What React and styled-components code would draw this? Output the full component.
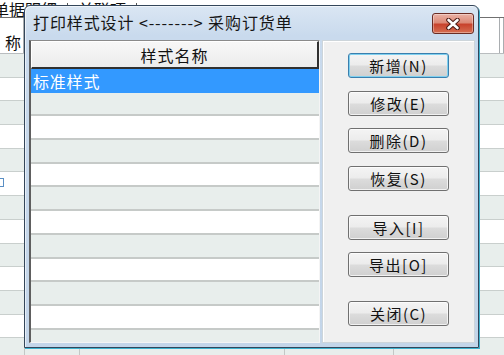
import React from 'react';
import styled, { createGlobalStyle } from 'styled-components';

const Global = createGlobalStyle`
  html, body { margin: 0; padding: 0; background: #fff; }
  body {
    width: 504px; height: 355px; overflow: hidden;
    font-family: "Noto Sans CJK SC", "Liberation Sans", sans-serif;
  }
`;

const Page = styled.div`
  position: relative;
  width: 504px;
  height: 355px;
  overflow: hidden;
  background: #fff;
`;

/* ---------- background spreadsheet ---------- */
const Sheet = styled.div`
  display: flex;
  flex-direction: column;
  width: 100%;
  height: 100%;
`;

const TabStrip = styled.div`
  height: 17px;
  flex: none;
  display: flex;
  align-items: flex-end;
  gap: 10px;
  margin-left: -7px;
  border-bottom: 1px solid #707070;
  font-size: 16px;
  line-height: 16px;
  color: #111;
  overflow: hidden;
`;

const TabSep = styled.span`
  width: 1px;
  height: 14px;
  background: #555;
`;

const HeaderRow = styled.div`
  height: 35px;
  flex: none;
  display: flex;
  border-bottom: 1px solid #b9bdbf;
`;

const HeadCell = styled.div`
  width: ${p => p.$w}px;
  flex: ${p => (p.$grow ? 1 : 'none')};
  display: flex;
  align-items: flex-end;
  justify-content: flex-end;
  padding: 0 2px 2px 0;
  box-sizing: border-box;
  border-right: 1px solid #a9adb0;
  font-size: 16px;
  line-height: 18px;
  color: #111;
`;

const BgRow = styled.div`
  height: 23.7px;
  flex: none;
  display: flex;
  box-sizing: border-box;
  border-bottom: 1px solid #c9cfcd;
  background: ${p => (p.$alt ? '#e8eeec' : '#ffffff')};
`;

const BgCell = styled.div`
  width: ${p => p.$w}px;
  flex: ${p => (p.$grow ? 1 : 'none')};
  border-right: 1px solid #c3c8c6;
  position: relative;
`;

const Handle = styled.span`
  position: absolute;
  left: -4px;
  top: 6px;
  width: 6px;
  height: 7px;
  border: 1px solid #5a8fc4;
  background: #fff;
`;

/* ---------- dialog ---------- */
const Window = styled.div`
  position: absolute;
  left: 24px;
  top: 5px;
  width: 455px;
  height: 343px;
  box-sizing: border-box;
  display: flex;
  flex-direction: column;
  border: 1px solid #34465a;
  border-radius: 6px 6px 0 0;
  background: linear-gradient(#dae6f3 0px, #c9daed 30px, #c3d5e9 100%);
  box-shadow: 1px 1px 0 #3eb2cf, inset 1px 1px 0 rgba(255,255,255,0.6);
`;

const TitleBar = styled.div`
  height: 32px;
  flex: none;
  display: flex;
  align-items: center;
  justify-content: space-between;
  padding: 0 4px 0 8px;
`;

const TitleText = styled.span`
  font-size: 16px;
  line-height: 18px;
  letter-spacing: 0.9px;
  color: #151515;
  margin-top: -1px;
`;

const CloseButton = styled.div`
  width: 42px;
  height: 21px;
  box-sizing: border-box;
  margin-top: 3px;
  display: flex;
  align-items: center;
  justify-content: center;
  border: 1px solid #6a2c24;
  border-radius: 3px;
  background: linear-gradient(#eab2a6 0%, #dc8a77 45%, #c8432d 55%, #d66f52 100%);
  box-shadow: inset 0 0 0 1px rgba(255,255,255,0.35);
`;

const Client = styled.div`
  flex: 1;
  display: flex;
  gap: 2px;
  padding: 2px 3px 4px 4px;
  min-height: 0;
`;

const ListBox = styled.div`
  width: 291px;
  flex: none;
  box-sizing: border-box;
  display: flex;
  flex-direction: column;
  overflow: hidden;
  background: #fff;
  border-left: 2px solid #5e5e5e;
  border-top: 1px solid #8a8a8a;
  border-right: 1px solid #f4f4f4;
  border-bottom: 1px solid #f4f4f4;
`;

const ListHeader = styled.div`
  height: 28px;
  flex: none;
  box-sizing: border-box;
  display: flex;
  align-items: center;
  justify-content: center;
  background: linear-gradient(#f7f7f7, #ececec);
  border-top: 1px solid #fff;
  border-left: 1px solid #fff;
  border-right: 2px solid #303030;
  border-bottom: 2px solid #303030;
  font-size: 16px;
  letter-spacing: 1px;
  color: #111;
`;

const ListRow = styled.div`
  height: 23.7px;
  flex: none;
  box-sizing: border-box;
  display: flex;
  align-items: center;
  padding-left: 2px;
  font-size: 16px;
  letter-spacing: 0.8px;
  color: ${p => (p.$selected ? '#fff' : '#111')};
  background: ${p => (p.$selected ? '#3399ff' : p.$alt ? '#e8eeec' : '#ffffff')};
  border-bottom: ${p => (p.$selected ? 'none' : '2px solid #c6cac8')};
`;

const Panel = styled.div`
  flex: 1;
  box-sizing: border-box;
  display: flex;
  flex-direction: column;
  align-items: center;
  padding-top: 12px;
  gap: 12.5px;
  background: #f0f0f0;
  border: 1px solid #cdd5da;
  box-shadow: inset 1px 1px 0 #fff;
`;

const Button = styled.div`
  width: 101px;
  height: 25px;
  flex: none;
  box-sizing: border-box;
  margin-top: ${p => p.$extra || 0}px;
  display: flex;
  align-items: center;
  justify-content: center;
  border: 1px solid ${p => (p.$default ? '#3a7fae' : '#707070')};
  border-radius: 3px;
  background: linear-gradient(#f4f4f4 0%, #ececec 48%, #dcdcdc 52%, #d0d0d0 100%);
  box-shadow: ${p => (p.$default ? 'inset 0 0 0 1px #7fd0ef' : 'inset 0 0 0 1px rgba(255,255,255,0.7)')};
  font-size: 15px;
  letter-spacing: 1.5px;
  color: #111;
`;

const CloseIcon = () => (
  <svg width="16" height="12" viewBox="0 0 16 12">
    <path d="M3.5 2 L12.5 10 M12.5 2 L3.5 10" stroke="#4a1a14" strokeWidth="4.6" strokeLinecap="round" />
    <path d="M3.5 2 L12.5 10 M12.5 2 L3.5 10" stroke="#ffffff" strokeWidth="2.6" strokeLinecap="round" />
  </svg>
);

const bgRows = Array.from({ length: 13 }, (_, i) => i);
const listRows = Array.from({ length: 12 }, (_, i) => i);

const buttons = [
  { label: '新增(N)', def: true },
  { label: '修改(E)' },
  { label: '删除(D)' },
  { label: '恢复(S)' },
  { label: '导入[I]', extra: 11.5 },
  { label: '导出[O]' },
  { label: '关闭(C)', extra: 11 },
];

export default function App() {
  return (
    <Page>
      <Global />
      <Sheet>
        <TabStrip>
          <span>单据明细</span>
          <TabSep />
          <span>关联项</span>
          <TabSep />
        </TabStrip>
        <HeaderRow>
          <HeadCell $w={24}>称</HeadCell>
          <HeadCell $w={54} />
          <HeadCell $w={204} />
          <HeadCell $w={108} />
          <HeadCell $w={110} />
          <HeadCell $grow />
        </HeaderRow>
        {bgRows.map(i => (
          <BgRow key={i} $alt={i % 2 === 0}>
            <BgCell $w={24}>{i === 5 && <Handle />}</BgCell>
            <BgCell $w={54} />
            <BgCell $w={204} />
            <BgCell $w={108} />
            <BgCell $w={110} />
            <BgCell $grow />
          </BgRow>
        ))}
      </Sheet>

      <Window>
        <TitleBar>
          <TitleText>打印样式设计 &lt;-------&gt; 采购订货单</TitleText>
          <CloseButton>
            <CloseIcon />
          </CloseButton>
        </TitleBar>
        <Client>
          <ListBox>
            <ListHeader>样式名称</ListHeader>
            {listRows.map(i => (
              <ListRow key={i} $selected={i === 0} $alt={i % 2 === 1}>
                {i === 0 ? '标准样式' : ''}
              </ListRow>
            ))}
          </ListBox>
          <Panel>
            {buttons.map(b => (
              <Button key={b.label} $default={b.def} $extra={b.extra}>
                {b.label}
              </Button>
            ))}
          </Panel>
        </Client>
      </Window>
    </Page>
  );
}
